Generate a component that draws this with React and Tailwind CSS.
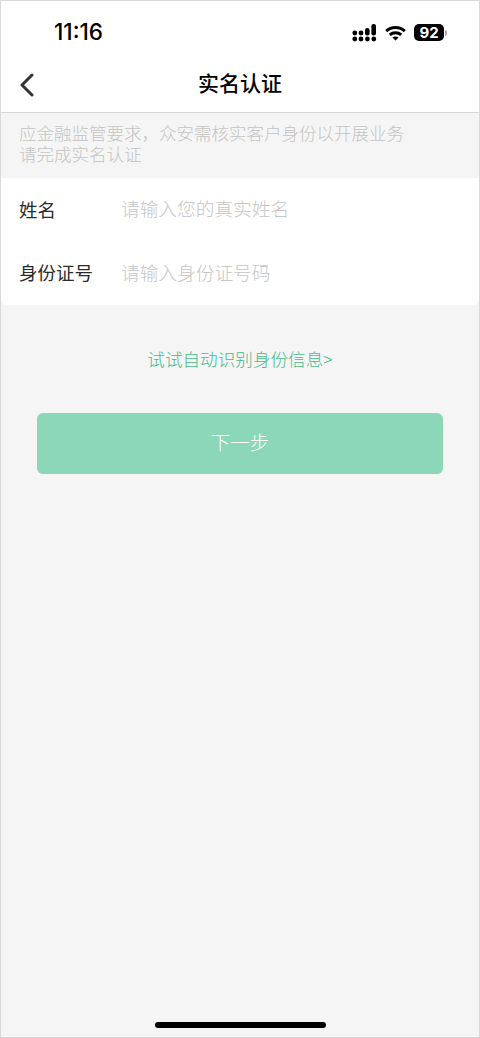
const cjk = "font-['Noto_Sans_CJK_SC','Liberation_Sans',sans-serif]"

function StatusIcons() {
  return (
    <div className="flex items-center gap-[8px]">
      <svg width="25" height="18" viewBox="0 0 25 18" fill="#000">
        <circle cx="2.8" cy="15" r="2.4" />
        <circle cx="9" cy="15" r="2.4" />
        <circle cx="15.4" cy="15" r="2.4" />
        <circle cx="21.8" cy="15" r="2.4" />
        <circle cx="2.8" cy="9" r="2.4" />
        <circle cx="9" cy="9" r="2.4" />
        <rect x="13" y="4" width="4.6" height="7.5" rx="2.2" />
        <rect x="19.4" y="0" width="4.6" height="11.5" rx="2.2" />
      </svg>
      <svg width="21" height="16" viewBox="0 0 21 16" fill="none" stroke="#000" strokeWidth="3">
        <path d="M1.2 6.2C6.4 1.4 14.6 1.4 19.8 6.2" />
        <path d="M4.8 9.8C8 7 13 7 16.2 9.8" />
        <path d="M10.5 15.5L7.4 12.6C9.2 11.2 11.8 11.2 13.6 12.6Z" fill="#000" stroke="none" />
      </svg>
      <div className="flex items-center gap-[1px]">
        <div className="w-[30px] h-[17px] rounded-[5px] bg-black flex items-center justify-center text-white font-['Inter','Liberation_Sans',sans-serif] font-bold text-[15px] leading-none">
          92
        </div>
        <div className="w-[2px] h-[6px] rounded-r-sm bg-[#a8a8a8]" />
      </div>
    </div>
  )
}

function Row({ label, placeholder }) {
  return (
    <div className="flex items-center h-[64px] pl-[18px] pb-[2px]">
      <span className="w-[102px] text-[18.5px] leading-none text-[#2b2b2b]">{label}</span>
      <span className="text-[18.7px] font-light leading-none text-[#c6c6c6]">{placeholder}</span>
    </div>
  )
}

export default function App() {
  return (
    <div className={`${cjk} w-[480px] h-[1038px] flex flex-col border border-[#d9d9d9] bg-[#f5f5f5] overflow-hidden`}>
      <div className="bg-white h-[112px] flex flex-col border-b border-[#d9d9d9]">
        <div className="flex items-center justify-between h-[59px] pt-[4px] pl-[53px] pr-[32px]">
          <span className="font-['Inter','Liberation_Sans',sans-serif] font-medium text-[22.5px] leading-none text-black">11:16</span>
          <StatusIcons />
        </div>
        <div className="relative flex-1 flex items-center justify-center pb-[8px]">
          <svg className="absolute left-[19px] top-[13px]" width="14" height="24" viewBox="0 0 14 24" fill="none" stroke="#333" strokeWidth="3" strokeLinecap="round" strokeLinejoin="round">
            <path d="M12 2L2 12L12 22" />
          </svg>
          <span className="text-[21px] font-medium leading-none text-black">实名认证</span>
        </div>
      </div>
      <div className="h-[65px] pt-[9px] pl-[18px] text-[17.5px] font-light leading-[21px] text-[#c4c4c4]">
        <p>应金融监管要求，众安需核实客户身份以开展业务</p>
        <p>请完成实名认证</p>
      </div>
      <div className="bg-white h-[127px] flex flex-col rounded-b-md">
        <Row label="姓名" placeholder="请输入您的真实姓名" />
        <Row label="身份证号" placeholder="请输入身份证号码" />
      </div>
      <div className="flex-1 flex flex-col items-center relative">
        <p className="mt-[42px] text-[17.6px] font-light leading-[24px] text-[#47bb8b]">试试自动识别身份信息&gt;</p>
        <button className="mt-[42px] w-[406px] h-[61px] rounded-md bg-[#8bd7b7] text-white text-[19.5px] font-light pb-[4px] flex items-center justify-center">
          下一步
        </button>
        <div className="absolute bottom-[9px] left-[154px] w-[171px] h-[6px] rounded-full bg-black" />
      </div>
    </div>
  )
}
